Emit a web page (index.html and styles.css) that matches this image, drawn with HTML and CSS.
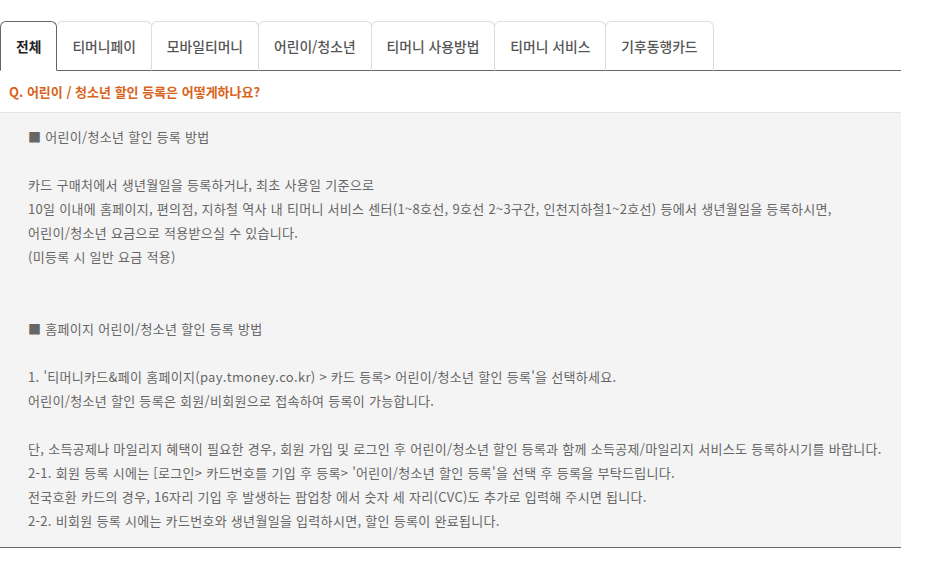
FILE: index.html
```html
<!DOCTYPE html>
<html lang="ko">

<head>
    <meta charset="UTF-8">
    <meta name="viewport" content="width=device-width, initial-scale=1.0">
    <title>자주 묻는 질문</title>
    <link rel="stylesheet" href="styles.css">
</head>

<body>
    <div class="faq-container">
        <ul class="faq-tabs">
            <li class="tab active">전체</li>
            <li class="tab">티머니페이</li>
            <li class="tab">모바일티머니</li>
            <li class="tab">어린이/청소년</li>
            <li class="tab">티머니 사용방법</li>
            <li class="tab">티머니 서비스</li>
            <li class="tab">기후동행카드</li>
        </ul>

        <h2 class="faq-question">Q. 어린이 / 청소년 할인 등록은 어떻게하나요?</h2>

        <div class="faq-answer">
            <p>■ 어린이/청소년 할인 등록 방법</p>
            <p>&nbsp;</p>
            <p>카드 구매처에서 생년월일을 등록하거나, 최초 사용일 기준으로</p>
            <p>10일 이내에 홈페이지, 편의점, 지하철 역사 내 티머니 서비스 센터(1~8호선, 9호선 2~3구간, 인천지하철1~2호선) 등에서 생년월일을 등록하시면,</p>
            <p>어린이/청소년 요금으로 적용받으실 수 있습니다.</p>
            <p>(미등록 시 일반 요금 적용)</p>
            <p>&nbsp;</p>
            <p>&nbsp;</p>
            <p>■ 홈페이지 어린이/청소년 할인 등록 방법</p>
            <p>&nbsp;</p>
            <p>1. '티머니카드&amp;페이 홈페이지(pay.tmoney.co.kr) &gt; 카드 등록&gt; 어린이/청소년 할인 등록'을 선택하세요.</p>
            <p>어린이/청소년 할인 등록은 회원/비회원으로 접속하여 등록이 가능합니다.</p>
            <p>&nbsp;</p>
            <p>단, 소득공제나 마일리지 혜택이 필요한 경우, 회원 가입 및 로그인 후 어린이/청소년 할인 등록과 함께 소득공제/마일리지 서비스도 등록하시기를 바랍니다.</p>
            <p>2-1. 회원 등록 시에는 [로그인&gt; 카드번호를 기입 후 등록&gt; '어린이/청소년 할인 등록'을 선택 후 등록을 부탁드립니다.</p>
            <p>전국호환 카드의 경우, 16자리 기입 후 발생하는 팝업창 에서 숫자 세 자리(CVC)도 추가로 입력해 주시면 됩니다.</p>
            <p>2-2. 비회원 등록 시에는 카드번호와 생년월일을 입력하시면, 할인 등록이 완료됩니다.</p>
        </div>
    </div>
</body>

</html>
```

FILE: styles.css
```css
/* Reset */
* {
    margin: 0;
    padding: 0;
    box-sizing: border-box;
}

body {
    font-family: "Noto Sans CJK KR", "Noto Sans", sans-serif;
    background-color: #ffffff;
    color: #666;
}

.faq-container {
    width: 901px;
    padding-top: 21px;
}

/* Tabs */
.faq-tabs {
    display: flex;
    list-style: none;
    border-bottom: 1px solid #666;
}

.tab {
    height: 50px;
    margin-bottom: -1px;
    margin-right: -1px;
    padding: 0 15px;
    border: 1px solid #ddd;
    border-bottom-color: #666;
    border-radius: 6px 6px 0 0;
    background: #fff;
    font-size: 13.8px;
    font-weight: 500;
    color: #555;
    line-height: 48px;
    white-space: nowrap;
}

.tab.active {
    position: relative;
    z-index: 1;
    border-color: #666;
    border-bottom-color: #fff;
    font-weight: 700;
    color: #222;
}

/* Question */
.faq-question {
    height: 41px;
    padding-left: 9px;
    font-size: 13px;
    font-weight: 700;
    line-height: 41px;
    color: #d8641c;
}

/* Answer */
.faq-answer {
    background-color: #f4f4f4;
    border-top: 1px solid #e4e4e4;
    border-bottom: 1px solid #666;
    padding: 12px 0 14px 28px;
}

.faq-answer p {
    font-size: 13px;
    letter-spacing: 0.3px;
    line-height: 24px;
    color: #666;
    white-space: nowrap;
}
```
